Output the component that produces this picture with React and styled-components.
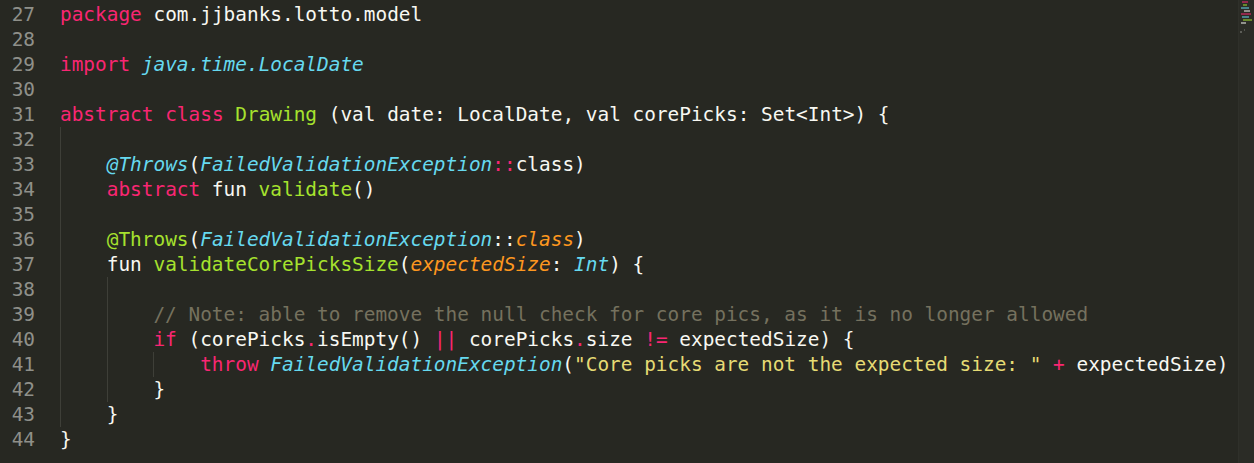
import React from "react";
import styled, { createGlobalStyle } from "styled-components";

const GlobalStyle = createGlobalStyle`
  html, body {
    margin: 0;
    padding: 0;
    background: #272822;
  }
`;

const COLORS = {
  plain: "#f8f8f2",
  keyword: "#f92672",
  func: "#a6e22e",
  type: "#66d9ef",
  param: "#fd971f",
  string: "#e6db74",
  comment: "#75715e",
};

// [kind, text, italic]
const lines = [
  { n: 27, depth: 0, tokens: [["keyword", "package"], ["plain", " com.jjbanks.lotto.model"]] },
  { n: 28, depth: 0, tokens: [] },
  { n: 29, depth: 0, tokens: [["keyword", "import"], ["plain", " "], ["type", "java.time.LocalDate", true]] },
  { n: 30, depth: 0, tokens: [] },
  {
    n: 31,
    depth: 0,
    tokens: [
      ["keyword", "abstract class"],
      ["plain", " "],
      ["func", "Drawing"],
      ["plain", " (val date: LocalDate, val corePicks: Set<Int>) {"],
    ],
  },
  { n: 32, depth: 1, tokens: [] },
  {
    n: 33,
    depth: 1,
    tokens: [
      ["type", "@Throws", true],
      ["plain", "("],
      ["type", "FailedValidationException", true],
      ["keyword", "::"],
      ["plain", "class)"],
    ],
  },
  {
    n: 34,
    depth: 1,
    tokens: [["keyword", "abstract"], ["plain", " fun "], ["func", "validate"], ["plain", "()"]],
  },
  { n: 35, depth: 1, tokens: [] },
  {
    n: 36,
    depth: 1,
    tokens: [
      ["func", "@Throws"],
      ["plain", "("],
      ["type", "FailedValidationException", true],
      ["plain", "::"],
      ["param", "class", true],
      ["plain", ")"],
    ],
  },
  {
    n: 37,
    depth: 1,
    tokens: [
      ["plain", "fun "],
      ["func", "validateCorePicksSize"],
      ["plain", "("],
      ["param", "expectedSize", true],
      ["plain", ": "],
      ["type", "Int", true],
      ["plain", ") {"],
    ],
  },
  { n: 38, depth: 2, tokens: [] },
  {
    n: 39,
    depth: 2,
    tokens: [["comment", "// Note: able to remove the null check for core pics, as it is no longer allowed"]],
  },
  {
    n: 40,
    depth: 2,
    tokens: [
      ["keyword", "if"],
      ["plain", " (corePicks"],
      ["keyword", "."],
      ["plain", "isEmpty() "],
      ["keyword", "||"],
      ["plain", " corePicks"],
      ["keyword", "."],
      ["plain", "size "],
      ["keyword", "!="],
      ["plain", " expectedSize) {"],
    ],
  },
  {
    n: 41,
    depth: 3,
    tokens: [
      ["keyword", "throw"],
      ["plain", " "],
      ["type", "FailedValidationException", true],
      ["plain", "("],
      ["string", "\"Core picks are not the expected size: \""],
      ["plain", " "],
      ["keyword", "+"],
      ["plain", " expectedSize)"],
    ],
  },
  { n: 42, depth: 2, tokens: [["plain", "}"]] },
  { n: 43, depth: 1, tokens: [["plain", "}"]] },
  { n: 44, depth: 0, tokens: [["plain", "}"]] },
];

const Editor = styled.div`
  display: flex;
  width: 1254px;
  height: 463px;
  overflow: hidden;
  background: #272822;
  font-family: "DejaVu Sans Mono", "Liberation Mono", monospace;
  font-size: 19.41px;
  line-height: 25px;
`;

const Gutter = styled.div`
  flex: 0 0 60px;
  box-sizing: border-box;
  padding: 2px 25px 0 0;
  text-align: right;
  color: #8f908a;
`;

const LineNumber = styled.div`
  height: 25px;
`;

const Code = styled.div`
  flex: 1;
  padding-top: 2px;
  white-space: pre;
`;

const Line = styled.div`
  display: flex;
  height: 25px;
`;

const Guide = styled.span`
  display: inline-block;
  width: 4ch;
  height: 25px;
  box-shadow: inset 1px 0 0 #3e3f38;
`;

const Token = styled.span`
  color: ${(p) => COLORS[p.$kind]};
  font-style: ${(p) => (p.$italic ? "italic" : "normal")};
`;

const Minimap = styled.div`
  flex: 0 0 15px;
  background: #2b2c26;
  border-left: 1px solid #2f302a;
`;

const miniRows = [
  ["#f92672", 3, 6], ["#a6e22e", 4, 4], ["#66d9ef", 2, 8], ["#f8f8f2", 5, 6],
  ["#f92672", 2, 10], ["#66d9ef", 3, 7], ["#a6e22e", 4, 9], ["#f8f8f2", 2, 5],
];

function MiniMapArt() {
  return (
    <svg width="15" height="40" viewBox="0 0 15 40">
      {miniRows.map(([c, x, w], i) => (
        <rect key={i} x={x} y={1 + i * 3} width={w} height="2" fill={c} opacity="0.5" />
      ))}
      <rect x="1" y="31" width="2" height="2" fill="#8f908a" opacity="0.5" />
      <rect x="5" y="29" width="1" height="2" fill="#8f908a" opacity="0.4" />
    </svg>
  );
}

export default function App() {
  return (
    <>
      <GlobalStyle />
      <Editor>
        <Gutter>
          {lines.map((l) => (
            <LineNumber key={l.n}>{l.n}</LineNumber>
          ))}
        </Gutter>
        <Code>
          {lines.map((l) => (
            <Line key={l.n}>
              {Array.from({ length: l.depth }).map((_, i) => (
                <Guide key={i} />
              ))}
              {l.tokens.map(([kind, text, italic], i) => (
                <Token key={i} $kind={kind} $italic={italic}>
                  {text}
                </Token>
              ))}
            </Line>
          ))}
        </Code>
        <Minimap>
          <MiniMapArt />
        </Minimap>
      </Editor>
    </>
  );
}
